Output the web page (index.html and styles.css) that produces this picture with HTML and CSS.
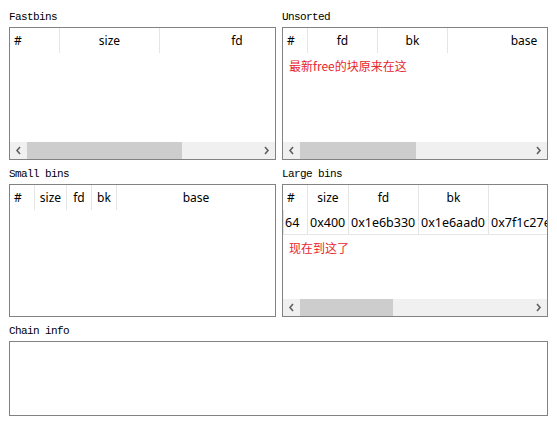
FILE: index.html
```html
<!DOCTYPE html>
<html>
<head>
<meta charset="utf-8">
<link rel="stylesheet" href="styles.css">
</head>
<body>
<div class="page">
  <section class="panel">
    <div class="label">Fastbins</div>
    <div class="box h133">
      <div class="view">
        <div class="row head">
          <div class="cell first w50">#</div>
          <div class="cell w100">size</div>
          <div class="cell w155">fd</div>
        </div>
      </div>
      <div class="hscroll">
        <span class="arrow"><svg width="7" height="9" viewBox="0 0 7 9"><polyline points="5,1 2,4.5 5,8" fill="none" stroke="#606060" stroke-width="1.6"/></svg></span>
        <div class="track"><div class="thumb" style="width:155px"></div></div>
        <span class="arrow"><svg width="7" height="9" viewBox="0 0 7 9"><polyline points="2,1 5,4.5 2,8" fill="none" stroke="#606060" stroke-width="1.6"/></svg></span>
      </div>
    </div>
  </section>

  <section class="panel">
    <div class="label">Unsorted</div>
    <div class="box h133">
      <div class="view">
        <div class="row head">
          <div class="cell first w25">#</div>
          <div class="cell w70">fd</div>
          <div class="cell w70">bk</div>
          <div class="cell w153">base</div>
        </div>
        <div class="note">最新free的块原来在这</div>
      </div>
      <div class="hscroll">
        <span class="arrow"><svg width="7" height="9" viewBox="0 0 7 9"><polyline points="5,1 2,4.5 5,8" fill="none" stroke="#606060" stroke-width="1.6"/></svg></span>
        <div class="track"><div class="thumb" style="width:116px"></div></div>
        <span class="arrow"><svg width="7" height="9" viewBox="0 0 7 9"><polyline points="2,1 5,4.5 2,8" fill="none" stroke="#606060" stroke-width="1.6"/></svg></span>
      </div>
    </div>
  </section>

  <section class="panel">
    <div class="label">Small bins</div>
    <div class="box h133">
      <div class="view">
        <div class="row head">
          <div class="cell first w25">#</div>
          <div class="cell w32">size</div>
          <div class="cell w25">fd</div>
          <div class="cell w25">bk</div>
          <div class="cell grow">base</div>
        </div>
      </div>
    </div>
  </section>

  <section class="panel">
    <div class="label">Large bins</div>
    <div class="box h133">
      <div class="view">
        <div class="row head">
          <div class="cell first w25"># </div>
          <div class="cell w41">size</div>
          <div class="cell w70">fd</div>
          <div class="cell w70">bk</div>
          <div class="cell w110"></div>
        </div>
        <div class="row data">
          <div class="cell w25">64</div>
          <div class="cell w41">0x400</div>
          <div class="cell w70">0x1e6b330</div>
          <div class="cell w70">0x1e6aad0</div>
          <div class="cell w110">0x7f1c27e8b068</div>
        </div>
        <div class="note">现在到这了</div>
      </div>
      <div class="hscroll">
        <span class="arrow"><svg width="7" height="9" viewBox="0 0 7 9"><polyline points="5,1 2,4.5 5,8" fill="none" stroke="#606060" stroke-width="1.6"/></svg></span>
        <div class="track"><div class="thumb" style="width:93px"></div></div>
        <span class="arrow"><svg width="7" height="9" viewBox="0 0 7 9"><polyline points="2,1 5,4.5 2,8" fill="none" stroke="#606060" stroke-width="1.6"/></svg></span>
      </div>
    </div>
  </section>

  <section class="panel wide">
    <div class="label">Chain info</div>
    <div class="box h75"></div>
  </section>
</div>
</body>
</html>
```

FILE: styles.css
```css
* { box-sizing: border-box; }
html, body { margin: 0; padding: 0; background: #ffffff; }
body {
  font-family: "Noto Sans", "Noto Sans CJK SC", sans-serif;
  font-size: 12px;
  color: #000;
}
.page {
  width: 557px;
  padding: 3px 9px 0 9px;
  display: grid;
  grid-template-columns: 267px 266px;
  column-gap: 6px;
}
.panel { display: flex; flex-direction: column; }
.panel.wide { grid-column: 1 / span 2; }
.label {
  height: 24px;
  padding-top: 8px;
  font-family: "Liberation Mono", monospace;
  font-size: 11px;
  letter-spacing: -0.6px;
  line-height: 12px;
  color: #000;
}
.box {
  border: 1px solid #828282;
  background: #fff;
  display: flex;
  flex-direction: column;
  overflow: hidden;
}
.h133 { height: 133px; }
.h75 { height: 75px; }
.view { flex: 1; overflow: hidden; }
.row { display: flex; white-space: nowrap; }
.row.head { height: 25px; }
.cell {
  flex: none;
  height: 25px;
  line-height: 25px;
  text-align: center;
  border-right: 1px solid #e5e5e5;
  overflow: hidden;
}
.cell.first { text-align: left; padding-left: 4px; }
.row.data .cell {
  text-align: left;
  padding-left: 2px;
  border-bottom: 1px solid #e5e5e5;
  font-size: 12.5px;
}
.row.data .cell:first-child { border-left: 1px solid #e5e5e5; padding-left: 1px; }
.w25 { width: 25px; }
.w32 { width: 32px; }
.w41 { width: 41px; }
.w50 { width: 50px; }
.w70 { width: 70px; }
.w100 { width: 100px; }
.w110 { width: 110px; }
.w153 { width: 153px; }
.w155 { width: 155px; }
.grow { flex: 1; border-right: none; }
.note {
  color: #e8262e;
  font-size: 12px;
  line-height: 16px;
  padding: 5px 0 0 6px;
  font-family: "Noto Sans CJK SC", "Noto Sans", sans-serif;
}
.hscroll {
  flex: none;
  height: 17px;
  display: flex;
  background: #f0f0f0;
}
.arrow {
  width: 17px;
  height: 17px;
  display: flex;
  align-items: center;
  justify-content: center;
}
.track { flex: 1; display: flex; }
.thumb { background: #cdcdcd; height: 17px; }
```
